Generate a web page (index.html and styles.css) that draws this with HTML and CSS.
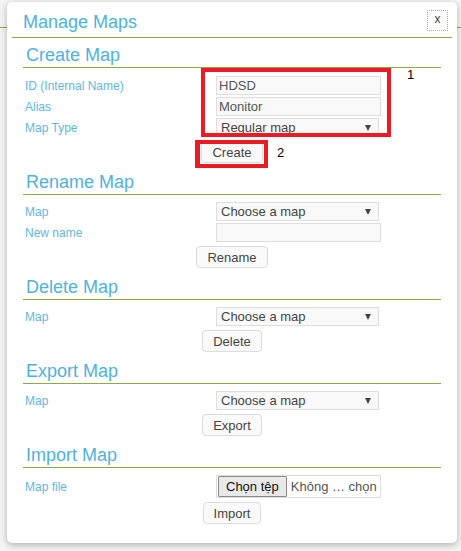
FILE: index.html
```html
<!DOCTYPE html>
<html lang="vi">
<head>
<meta charset="utf-8">
<title>Manage Maps</title>
<link rel="stylesheet" href="styles.css">
</head>
<body>
<div class="dialog">
  <div class="dlg-head">
    <h1 class="dlg-title">Manage Maps</h1>
    <button class="close" type="button">x</button>
  </div>
  <div class="dlg-body">
    <section class="sec">
      <h2 class="sec-title">Create Map</h2>
      <div class="form">
        <label class="lbl">ID (Internal Name)</label>
        <input class="field" type="text" value="HDSD">
        <label class="lbl">Alias</label>
        <input class="field" type="text" value="Monitor">
        <label class="lbl">Map Type</label>
        <span class="select"><select class="sel"><option>Regular map</option></select></span>
      </div>
      <div class="actions"><button class="btn" type="button">Create</button></div>
    </section>
    <section class="sec">
      <h2 class="sec-title">Rename Map</h2>
      <div class="form">
        <label class="lbl">Map</label>
        <span class="select"><select class="sel"><option>Choose a map</option></select></span>
        <label class="lbl">New name</label>
        <input class="field" type="text" value="">
      </div>
      <div class="actions"><button class="btn" type="button">Rename</button></div>
    </section>
    <section class="sec">
      <h2 class="sec-title">Delete Map</h2>
      <div class="form">
        <label class="lbl">Map</label>
        <span class="select"><select class="sel"><option>Choose a map</option></select></span>
      </div>
      <div class="actions"><button class="btn" type="button">Delete</button></div>
    </section>
    <section class="sec">
      <h2 class="sec-title">Export Map</h2>
      <div class="form">
        <label class="lbl">Map</label>
        <span class="select"><select class="sel"><option>Choose a map</option></select></span>
      </div>
      <div class="actions"><button class="btn" type="button">Export</button></div>
    </section>
    <section class="sec">
      <h2 class="sec-title">Import Map</h2>
      <div class="form">
        <label class="lbl">Map file</label>
        <span class="file"><span class="file-btn">Chọn tệp</span><span class="file-name">Không … chọn</span></span>
      </div>
      <div class="actions"><button class="btn" type="button">Import</button></div>
    </section>
  </div>
  <div class="mark mark-1"></div>
  <div class="mark mark-2"></div>
  <span class="num num-1">1</span>
  <span class="num num-2">2</span>
</div>
</body>
</html>
```
FILE: styles.css
```css
html, body {
  margin: 0;
  padding: 0;
}
body {
  background-color: #f4f4f4;
  background-image: linear-gradient(#8bac3f, #8bac3f);
  background-repeat: no-repeat;
  background-size: 100% 1px;
  background-position: 0 27px;
  padding: 2px 0 0 7px;
  font-family: "Liberation Sans", Arial, sans-serif;
  height: 551px;
  box-sizing: border-box;
  overflow: hidden;
}
.dialog {
  position: relative;
  width: 450px;
  background: #fff;
  border-radius: 5px;
  box-shadow: 0 2px 7px rgba(0, 0, 0, 0.28);
  padding-bottom: 19px;
}
.dlg-head {
  display: flex;
  justify-content: space-between;
  align-items: flex-start;
  margin: 0 5px;
  padding: 8px 4px 5px 11px;
  border-bottom: 1px solid #8bac3f;
}
.dlg-title {
  margin: 2px 0 0;
  font-size: 18px;
  line-height: 20px;
  font-weight: normal;
  color: #50b3da;
}
.close {
  width: 21px;
  height: 21px;
  padding: 0 0 3px;
  margin: 0;
  border: 1px dotted #aaa;
  background: transparent;
  font-family: "Liberation Sans", Arial, sans-serif;
  font-size: 12px;
  line-height: 14px;
  color: #444;
}
.dlg-body {
  padding: 0 16px;
}
.sec-title {
  margin: 9px 0 0;
  padding: 0 0 2px 3px;
  font-size: 18px;
  line-height: 20px;
  font-weight: normal;
  color: #50b3da;
  border-bottom: 1px solid #8bac3f;
}
.sec:first-child .sec-title {
  margin-top: 7px;
}
.form {
  display: grid;
  grid-template-columns: 193px 165px;
  row-gap: 2px;
  align-items: center;
  margin-top: 7px;
}
.sec:first-child .form {
  margin-top: 8px;
}
.lbl {
  padding-left: 2px;
  font-size: 12px;
  line-height: 14px;
  color: #62b7dc;
}
.field {
  box-sizing: border-box;
  width: 165px;
  height: 19px;
  margin: 0;
  padding: 0 2px;
  border: 1px solid #dedede;
  background: #f9f9f9;
  font-family: "Liberation Sans", Arial, sans-serif;
  font-size: 13px;
  color: #555;
  outline: none;
}
.select {
  position: relative;
  display: block;
  width: 163px;
}
.select::after {
  content: "";
  position: absolute;
  right: 8px;
  top: 7px;
  border-left: 3px solid transparent;
  border-right: 3px solid transparent;
  border-top: 6px solid #444;
}
.sel {
  box-sizing: border-box;
  display: block;
  width: 163px;
  height: 19px;
  margin: 0;
  padding: 0 0 0 4px;
  border: 1px solid #dedede;
  border-radius: 0;
  background: #f9f9f9;
  -webkit-appearance: none;
  appearance: none;
  font-family: "Liberation Sans", Arial, sans-serif;
  font-size: 13px;
  color: #444;
  outline: none;
}
.file {
  box-sizing: border-box;
  display: flex;
  align-items: center;
  width: 165px;
  height: 23px;
  padding: 0 0 0 1px;
  border: 1px solid #dedede;
  background: #fff;
  overflow: hidden;
  white-space: nowrap;
}
.file-btn {
  box-sizing: border-box;
  height: 21px;
  padding: 0 7px;
  border: 1px solid #8a8a8a;
  border-radius: 1px;
  background: #e9e9e9;
  font-size: 13px;
  line-height: 19px;
  color: #111;
}
.file-name {
  padding-left: 4px;
  font-size: 13px;
  color: #555;
}
.actions {
  display: flex;
  justify-content: center;
  margin-top: 4px;
}
.btn {
  box-sizing: border-box;
  height: 22px;
  margin: 0;
  padding: 0 10px;
  border: 1px solid #dcdcdc;
  border-radius: 4px;
  background: #fafafa;
  font-family: "Liberation Sans", Arial, sans-serif;
  font-size: 13px;
  color: #444;
}
.mark {
  position: absolute;
  box-sizing: border-box;
  border: 4px solid #ed1c24;
}
.mark-1 {
  left: 194px;
  top: 66px;
  width: 190px;
  height: 69px;
}
.mark-2 {
  left: 188px;
  top: 138px;
  width: 73px;
  height: 28px;
  border-left-width: 5px;
}
.num {
  position: absolute;
  font-family: "Liberation Sans", Arial, sans-serif;
  font-size: 13px;
  line-height: 13px;
  color: #000;
}
.num-1 {
  left: 400px;
  top: 66px;
}
.num-2 {
  left: 270px;
  top: 144px;
}
```
